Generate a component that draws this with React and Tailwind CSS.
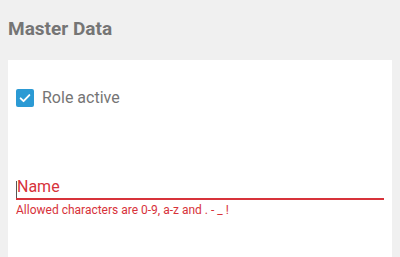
import React from "react";

const App = () => {
  return (
    <div
      className="min-h-[257px] bg-[#f0f0f0] px-2 flex flex-col"
      style={{ fontFamily: "Roboto, 'Liberation Sans', sans-serif" }}
    >
      {/* Header */}
      <h1 className="pt-[17px] h-[60px] text-[19px] font-bold text-[#757575] leading-[24px]">
        Master Data
      </h1>

      {/* Card */}
      <div className="flex-1 bg-white px-2 pt-[29px] pb-10">
        {/* checkbox */}
        <label className="flex items-center gap-2 h-[18px]">
          <span className="w-[18px] h-[18px] rounded-[2px] bg-[#2b9ad4] flex items-center justify-center">
            <svg width="14" height="14" viewBox="0 0 24 24" fill="none" stroke="white" strokeWidth="3.2" strokeLinecap="round" strokeLinejoin="round">
              <path d="M4.5 12.5l5 5L19.5 7" />
            </svg>
          </span>
          <span className="text-[16px] text-[#757575] leading-[18px]">Role active</span>
        </label>

        {/* Name input */}
        <div className="mt-[69px]">
          <div className="relative h-[24px] border-b-2 border-[#d7323a] flex items-end">
            <span className="absolute left-0 top-[5px] w-px h-[17px] bg-[#555]" />
            <span className="pl-px text-[16px] text-[#d7323a] leading-[20px] pb-[1px]">Name</span>
          </div>
          <p className="mt-[2px] text-[12px] text-[#d7323a] leading-[16px]">
            Allowed characters are 0-9, a-z and . - _ !
          </p>
        </div>
      </div>
    </div>
  );
};

export default App;
